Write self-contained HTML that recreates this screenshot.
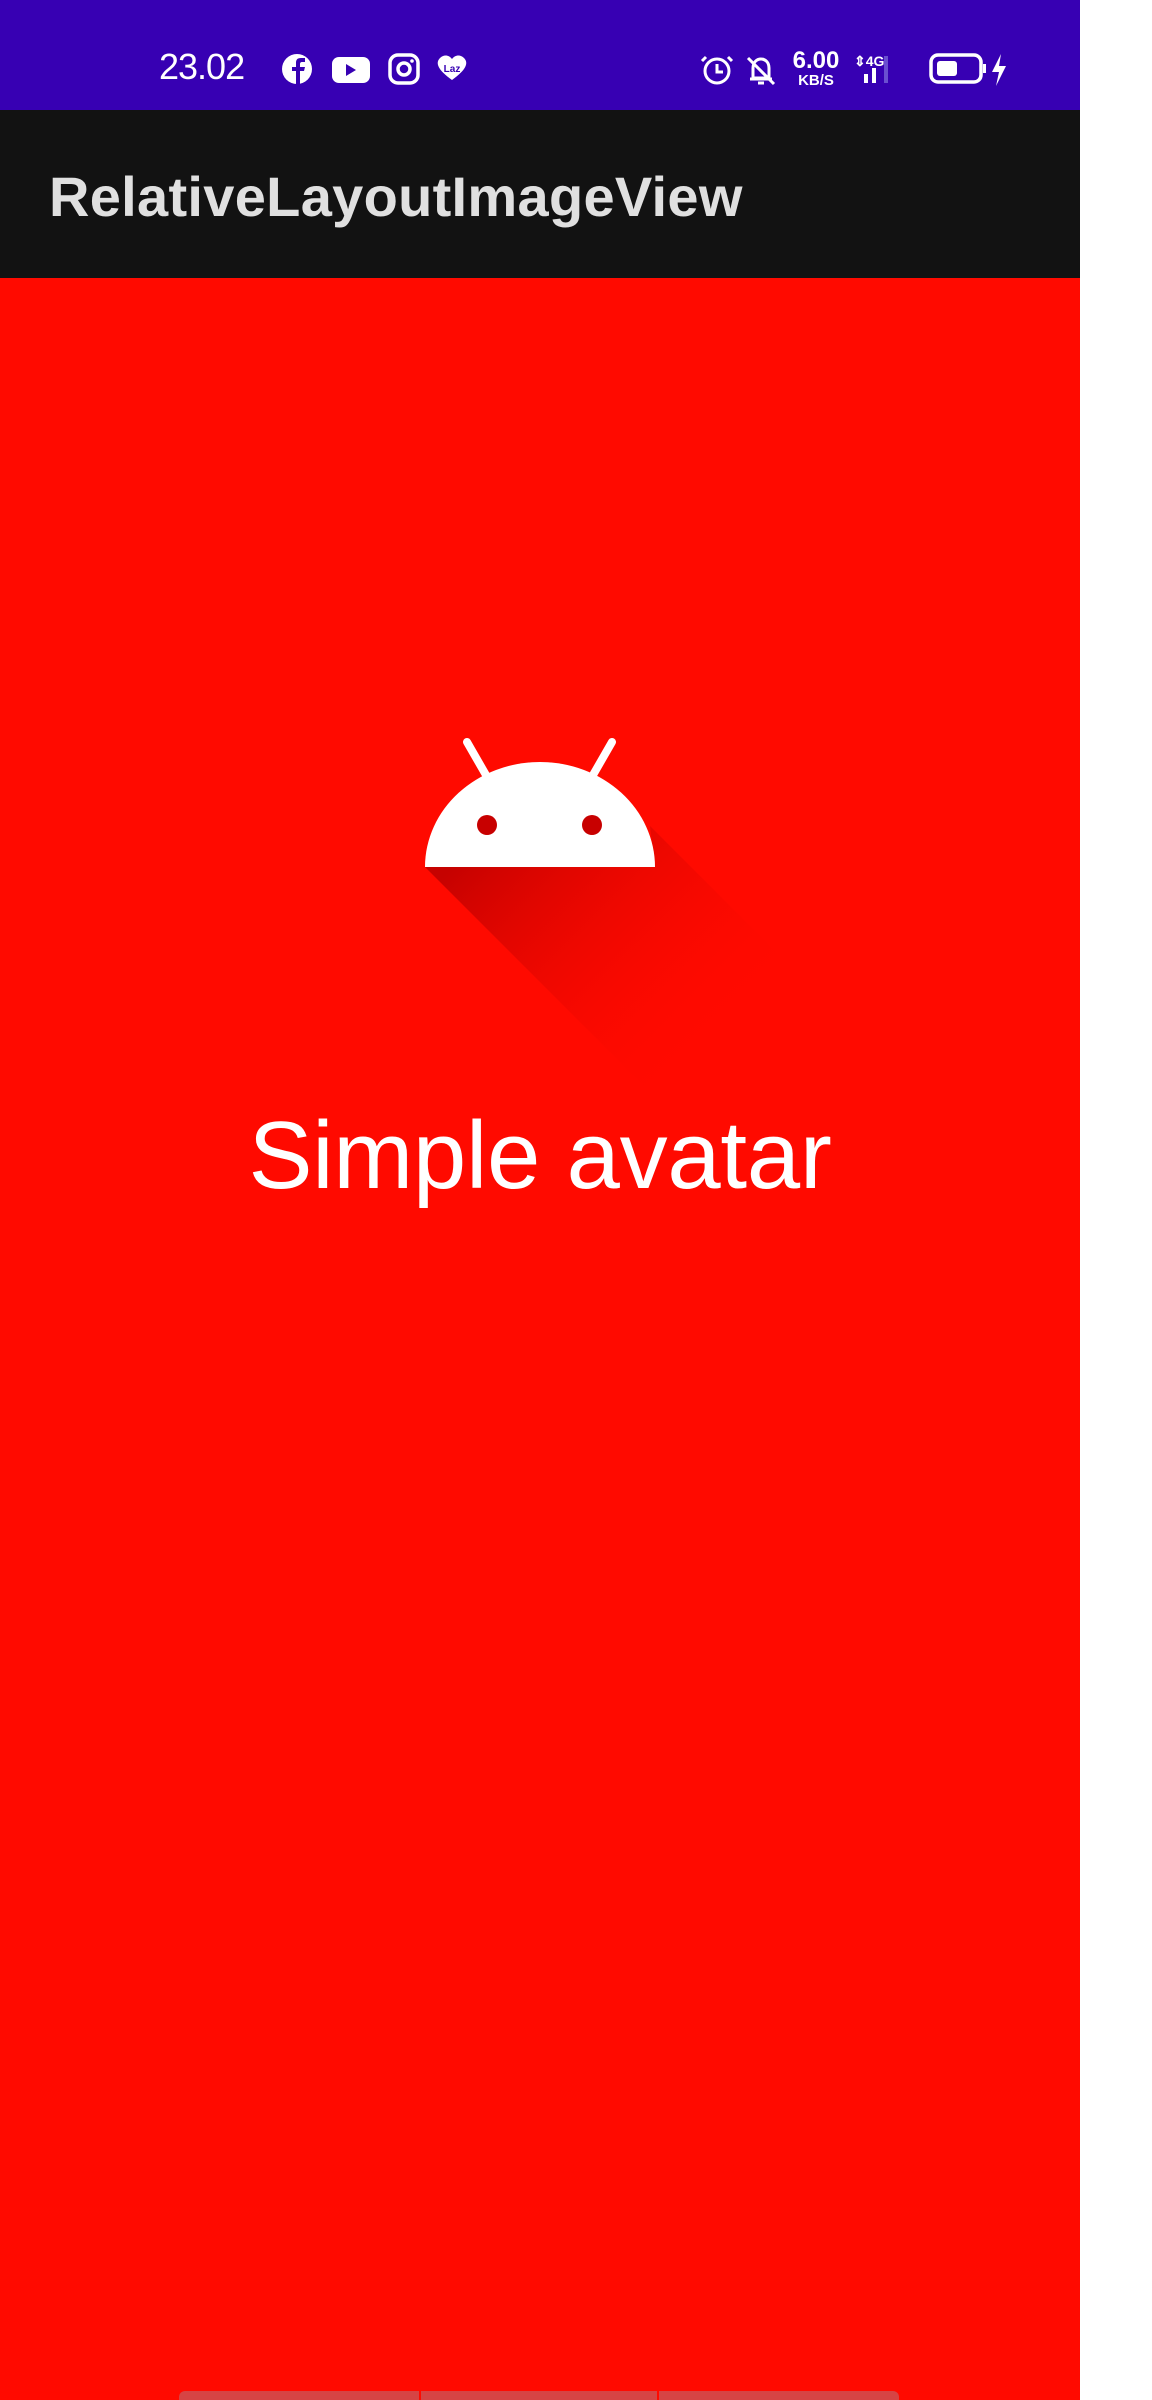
<!DOCTYPE html>
<html><head><style>
html,body{margin:0;padding:0;width:1152px;height:2400px;background:#fff;overflow:hidden;font-family:"Liberation Sans",sans-serif}
#app{position:absolute;left:0;top:0;width:1080px;height:2400px;background:#ff0a00}
#sb{position:absolute;left:0;top:0;width:1080px;height:110px;background:#3700b3;color:#fff}
#tb{position:absolute;left:0;top:110px;width:1080px;height:168px;background:#121212}
#title{position:absolute;left:49px;top:54px;font-size:56px;font-weight:bold;color:#e0e0e0;letter-spacing:0.3px;white-space:nowrap}
#txt{position:absolute;left:0;width:1080px;top:1101px;text-align:center;font-size:96px;color:#fff;letter-spacing:-0.3px}
.nav{position:absolute;top:2391px;height:9px;background:#d64444}
</style></head><body>
<div id="app">
<div id="sb">
 <div style="position:absolute;left:159px;top:46px;font-size:36px;letter-spacing:-1px">23.02</div>
 <svg style="position:absolute;left:280px;top:52px" width="200" height="34" viewBox="0 0 200 34">
  <circle cx="17" cy="17" r="15" fill="#fff"/><path d="M20 32V19h4l1-4h-5v-3c0-1 .5-2 2-2h3V6h-4c-4 0-5 2-5 5v4h-4v4h4v13z" fill="#3700b3"/>
  <rect x="52" y="5" width="38" height="26" rx="7" fill="#fff"/><path d="M66 12l10 6-10 6z" fill="#3700b3"/>
  <rect x="110" y="3" width="28" height="28" rx="8" fill="none" stroke="#fff" stroke-width="3.5"/><circle cx="124" cy="17" r="6" fill="none" stroke="#fff" stroke-width="3.5"/><circle cx="132" cy="9" r="1.8" fill="#fff"/>
  <path d="M160 6c4-4 9-3 12 1 3-4 8-5 12-1 5 5 2 12-12 22-14-10-17-17-12-22z" fill="#fff"/>
  <text x="172" y="20" font-size="10" font-weight="bold" fill="#3700b3" text-anchor="middle" font-family="Liberation Sans">Laz</text>
 </svg>
 <svg style="position:absolute;left:698px;top:50px" width="340" height="40" viewBox="0 0 340 40">
  <circle cx="19" cy="21" r="12" fill="none" stroke="#fff" stroke-width="3"/><path d="M19 14v8h6" stroke="#fff" stroke-width="3" fill="none"/><path d="M8 7l-4 4M30 7l4 4" stroke="#fff" stroke-width="3"/>
  <path d="M55 28V18c0-6 4-9 8-9s8 3 8 9v10zM52 29h22M60 33h6M50 8l26 26" stroke="#fff" stroke-width="3" fill="none"/>
  <text x="118" y="18" font-size="24" font-weight="bold" fill="#fff" text-anchor="middle" font-family="Liberation Sans">6.00</text>
  <text x="118" y="35" font-size="15" font-weight="bold" fill="#fff" text-anchor="middle" font-family="Liberation Sans">KB/S</text>
  <text x="156" y="16" font-size="14" font-weight="bold" fill="#fff" font-family="Liberation Sans">⇕4G</text>
  <rect x="166" y="24" width="4" height="9" fill="#fff"/><rect x="174" y="18" width="4" height="15" fill="#fff"/><rect x="186" y="6" width="4" height="27" fill="#6a4fd0"/>
  <rect x="233" y="5" width="50" height="27" rx="7" fill="none" stroke="#fff" stroke-width="3.5"/><rect x="239" y="11" width="20" height="15" rx="3" fill="#fff"/><rect x="285" y="14" width="3" height="9" fill="#fff"/>
  <path d="M303 4l-9 18h7l-3 14 10-20h-7z" fill="#fff"/>
 </svg>
</div>
<div id="tb"><div id="title">RelativeLayoutImageView</div></div>
<svg style="position:absolute;left:0;top:700px" width="1080" height="420" viewBox="0 700 1080 420">
 <defs><linearGradient id="g" x1="470" y1="850" x2="690" y2="1070" gradientUnits="userSpaceOnUse">
  <stop offset="0" stop-color="#b80000" stop-opacity=".8"/><stop offset="1" stop-color="#ff0a00" stop-opacity="0"/></linearGradient></defs>
 <path d="M425 867 L655 867 L650 826 L890 1066 L660 1102 Z" fill="url(#g)"/>
 <path d="M425 867 A115 105 0 0 1 655 867 Z" fill="#fff"/>
 <path d="M467 742 L490 782 M612 742 L589 782" stroke="#fff" stroke-width="8" stroke-linecap="round"/>
 <circle cx="487" cy="825" r="10" fill="#c80000"/><circle cx="592" cy="825" r="10" fill="#c80000"/>
</svg>
<div id="txt">Simple avatar</div>
<div class="nav" style="left:179px;width:240px;border-radius:6px 0 0 0"></div>
<div class="nav" style="left:421px;width:236px"></div>
<div class="nav" style="left:659px;width:240px;border-radius:0 6px 0 0"></div>
</div>
</body></html>
